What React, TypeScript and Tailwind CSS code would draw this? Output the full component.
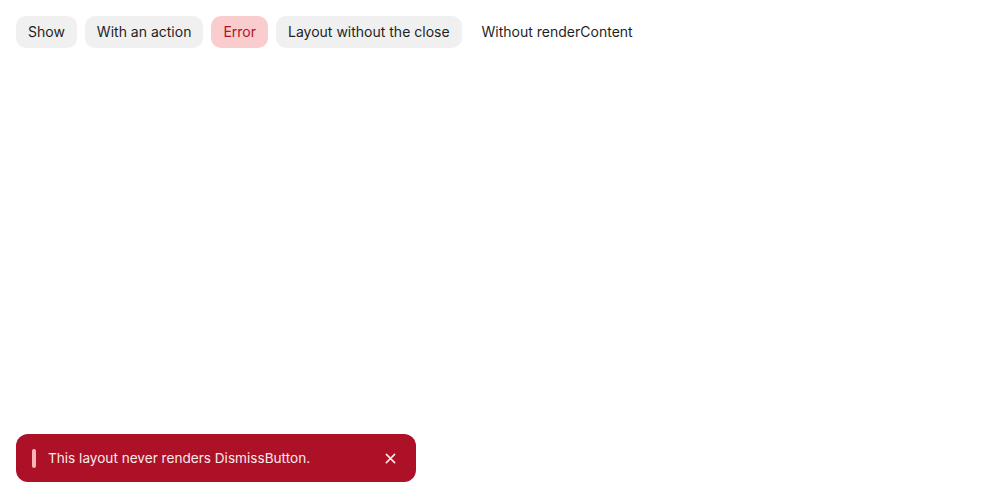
import * as React from 'react';

const buttons = ['Show', 'With an action', 'Error', 'Layout without the close', 'Without renderContent'];

export default function App() {
    return (
        <div className="relative w-[1000px] h-[500px] bg-white font-['Inter',sans-serif] text-[14px] overflow-hidden">
            {/* toolbar */}
            <div className="flex gap-2 p-4">
                {buttons.map((label) => {
                    let cls = 'bg-[#f0f0f0] text-[#1f1f1f]';
                    if (label === 'Error') cls = 'bg-[#f9cdcd] text-[#b0122b]';
                    if (label === 'Without renderContent') cls = 'bg-transparent text-[#1f1f1f]';
                    return (
                        <button key={label} className={`h-8 px-3 rounded-[10px] leading-none ${cls}`}>
                            {label}
                        </button>
                    );
                })}
            </div>

            {/* toast */}
            <div className="absolute left-4 top-[434px] w-[400px] h-12 rounded-xl bg-[#ad1127] text-white flex items-center pl-4 pr-[20px]">
                <div className="w-1 h-[19px] rounded-full bg-[#f8b4b8] mr-3"></div>
                <span className="flex-1 text-[13.6px] text-[#fbeaec]">This layout never renders DismissButton.</span>
                <svg width="11" height="11" viewBox="0 0 12 12" fill="none" stroke="#fbeaec" strokeWidth="1.7" strokeLinecap="round">
                    <path d="M1.5 1.5l9 9M10.5 1.5l-9 9" />
                </svg>
            </div>
        </div>
    );
}
